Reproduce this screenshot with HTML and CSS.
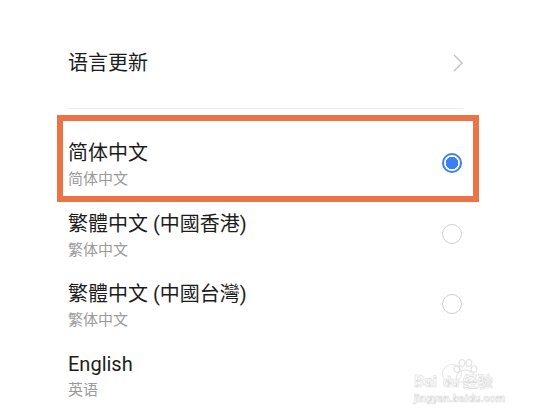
FILE: index.html
```html
<!DOCTYPE html>
<html lang="zh-CN">
<head>
    <meta charset="UTF-8">
    <meta name="viewport" content="width=device-width, initial-scale=1.0">
    <title>语言</title>
    <link rel="stylesheet" href="styles.css">
</head>
<body>
    <div class="page">
        <!-- 语言更新 -->
        <div class="update-row">
            <span class="update-title">语言更新</span>
            <svg class="chevron" width="10" height="18" viewBox="0 0 10 18">
                <polyline points="1,1 9,9 1,17" fill="none" stroke="#c2c2c2" stroke-width="1.4"/>
            </svg>
        </div>
        <div class="divider"></div>

        <!-- 语言列表 -->
        <div class="lang-list">
            <div class="lang-item selected">
                <div class="lang-text">
                    <div class="lang-title">简体中文</div>
                    <div class="lang-sub">简体中文</div>
                </div>
                <span class="radio checked"></span>
            </div>
            <div class="lang-item">
                <div class="lang-text">
                    <div class="lang-title">繁體中文 (中國香港)</div>
                    <div class="lang-sub">繁体中文</div>
                </div>
                <span class="radio"></span>
            </div>
            <div class="lang-item">
                <div class="lang-text">
                    <div class="lang-title">繁體中文 (中國台灣)</div>
                    <div class="lang-sub">繁体中文</div>
                </div>
                <span class="radio"></span>
            </div>
            <div class="lang-item">
                <div class="lang-text">
                    <div class="lang-title">English</div>
                    <div class="lang-sub">英语</div>
                </div>
                <span class="radio faded"></span>
            </div>
        </div>
    </div>

    <!-- 水印 -->
    <div class="watermark">
        <svg class="paw" width="26" height="24" viewBox="0 0 26 24">
            <g fill="none" stroke="#dedede" stroke-width="1">
                <ellipse cx="5" cy="10" rx="3" ry="3.5"/>
                <ellipse cx="10" cy="4" rx="3" ry="3.5"/>
                <ellipse cx="17" cy="4" rx="3" ry="3.5"/>
                <ellipse cx="22" cy="10" rx="3" ry="3.5"/>
                <path d="M4 20 C4 14 10 11 13.5 11 C17 11 23 14 23 20 C23 24 17 23 13.5 23 C10 23 4 24 4 20 Z"/>
            </g>
        </svg>
        <div class="wm-brand"><span>Bai</span><span class="wm-du">du</span><span class="wm-jy">经验</span></div>
        <div class="wm-url">jingyan.baidu.com</div>
    </div>
</body>
</html>
```

FILE: styles.css
```css
body {
    margin: 0;
    background: #ffffff;
    font-family: Roboto, "Noto Sans CJK SC", sans-serif;
    color: #1c1c1c;
    overflow: hidden;
}
.page {
    margin: 0 80px 0 68px;
}
.update-row {
    display: flex;
    justify-content: space-between;
    align-items: center;
    height: 26px;
    padding-top: 50px;
    padding-bottom: 32px;
}
.update-title {
    font-size: 20px;
    line-height: 26px;
}
.chevron {
    display: block;
}
.divider {
    height: 1px;
    background: #eeeeee;
}
.lang-list {
    padding-top: 19px;
}
.lang-item {
    position: relative;
    display: flex;
    justify-content: space-between;
    align-items: center;
    height: 70px;
}
.lang-item.selected {
    height: 72px;
}
.lang-item.selected::after {
    content: "";
    position: absolute;
    left: -11px;
    right: -16px;
    top: -13px;
    bottom: -2px;
    border: 6px solid #ea7447;
}
.lang-title {
    font-size: 20px;
    line-height: 26px;
}
.lang-sub {
    font-size: 15px;
    line-height: 20px;
    margin-top: 3px;
    color: #9b9b9b;
}
.radio {
    box-sizing: border-box;
    width: 20px;
    height: 20px;
    margin-right: 1px;
    margin-bottom: 2px;
    border: 1.5px solid #cfcfcf;
    border-radius: 50%;
}
.radio.faded {
    border-color: #e4e4e4;
}
.radio.checked {
    border: 2px solid #3b7ff2;
    background: radial-gradient(circle, #3b7ff2 0 6px, #ffffff 6.5px);
}
.watermark {
    position: absolute;
    left: 414px;
    top: 359px;
    width: 104px;
    color: #ffffff;
    -webkit-text-stroke: 0.6px #dadada;
}
.paw {
    position: absolute;
    left: 38px;
    top: 0;
}
.wm-brand {
    position: relative;
    display: flex;
    align-items: baseline;
    margin-top: 13px;
    font-size: 16px;
    line-height: 20px;
    font-weight: bold;
}
.wm-du {
    margin-left: 6px;
    font-size: 14px;
}
.wm-jy {
    margin-left: 4px;
    font-size: 15px;
}
.wm-url {
    font-size: 11px;
    line-height: 14px;
    font-weight: bold;
}
```
